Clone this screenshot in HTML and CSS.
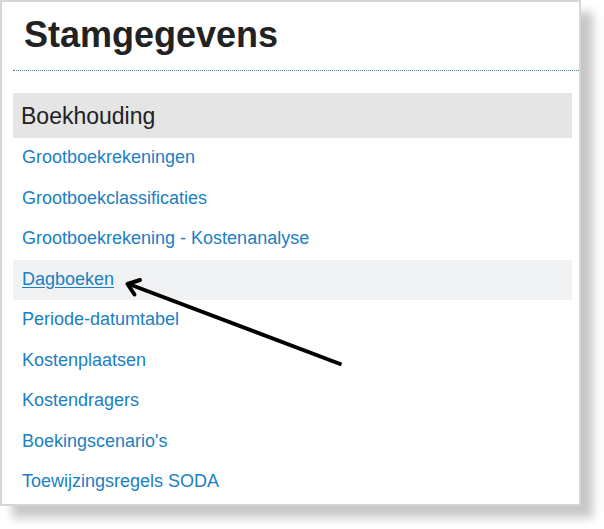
FILE: index.html
```html
<!DOCTYPE html>
<html lang="nl">
<head>
<meta charset="utf-8">
<title>Stamgegevens</title>
<link rel="stylesheet" href="styles.css">
</head>
<body>
<div class="panel">
  <h1 class="title">Stamgegevens</h1>
  <div class="rule"></div>
  <div class="section">
    <h2 class="section-head">Boekhouding</h2>
    <ul class="links">
      <li class="row"><a href="#">Grootboekrekeningen</a></li>
      <li class="row"><a href="#">Grootboekclassificaties</a></li>
      <li class="row"><a href="#">Grootboekrekening - Kostenanalyse</a></li>
      <li class="row row-hover"><a href="#" class="link-hover">Dagboeken</a></li>
      <li class="row"><a href="#">Periode-datumtabel</a></li>
      <li class="row"><a href="#">Kostenplaatsen</a></li>
      <li class="row"><a href="#">Kostendragers</a></li>
      <li class="row"><a href="#">Boekingscenario's</a></li>
      <li class="row"><a href="#">Toewijzingsregels SODA</a></li>
    </ul>
  </div>
</div>
<svg class="arrow" width="604" height="529" viewBox="0 0 604 529" aria-hidden="true">
  <line x1="341.5" y1="364.5" x2="130" y2="284.5" stroke="#000" stroke-width="4" stroke-linecap="butt"/>
  <polyline points="140,280 127.5,284 134.5,294.5" fill="none" stroke="#000" stroke-width="4" stroke-linejoin="round" stroke-linecap="round"/>
</svg>
</body>
</html>
```
FILE: styles.css
```css
html, body {
  margin: 0;
  padding: 0;
  background: #ffffff;
}
body {
  font-family: "Liberation Sans", Arial, sans-serif;
  position: relative;
  width: 604px;
  height: 529px;
  overflow: hidden;
}
.panel {
  width: 577px;
  height: 502px;
  border: 2px solid #d6d6d6;
  background: #ffffff;
  box-shadow: 12px 12px 9px rgba(0, 0, 0, 0.22);
  box-sizing: content-box;
}
.title {
  margin: 0;
  padding: 13px 0 0 22px;
  font-size: 36px;
  line-height: 39px;
  font-weight: bold;
  color: #222222;
}
.rule {
  margin: 16px 0 0 11px;
  border-top: 1px dotted #4f8399;
  height: 0;
}
.section {
  margin: 22px 7px 0 11px;
}
.section-head {
  margin: 0;
  height: 45px;
  box-sizing: border-box;
  padding: 2px 0 0 8px;
  font-size: 23px;
  line-height: 43px;
  font-weight: normal;
  color: #222222;
  background: #e5e5e5;
}
.links {
  list-style: none;
  margin: 0;
  padding: 0;
}
.row {
  height: 40.5px;
  box-sizing: border-box;
  padding: 1px 0 3px 9px;
  font-size: 18px;
  line-height: 36.5px;
}
.row a {
  color: #1b80c4;
  text-decoration: none;
}
.row-hover {
  background: #f1f2f4;
}
.row a.link-hover {
  text-decoration: underline;
  text-underline-offset: 2px;
}
.arrow {
  position: absolute;
  left: 0;
  top: 0;
  pointer-events: none;
}
```
